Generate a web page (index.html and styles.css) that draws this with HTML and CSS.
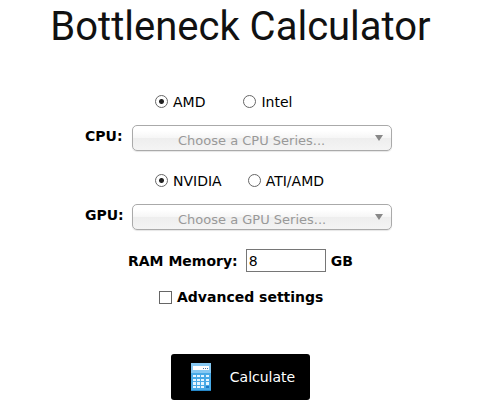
FILE: index.html
```html
<!DOCTYPE html>
<html lang="en">
<head>
<meta charset="utf-8">
<meta name="viewport" content="width=device-width, initial-scale=1">
<title>Bottleneck Calculator</title>
<link rel="stylesheet" href="styles.css">
</head>
<body>
<main>
  <h1>Bottleneck Calculator</h1>
  <form>
    <div class="brands brands-cpu">
      <label><input type="radio" name="cpu-brand" checked>AMD</label>
      <label><input type="radio" name="cpu-brand">Intel</label>
    </div>
    <div class="field">
      <label for="cpu">CPU:</label>
      <div class="picker"><select id="cpu"><option>Choose a CPU Series...</option></select></div>
    </div>
    <div class="brands brands-gpu">
      <label><input type="radio" name="gpu-brand" checked>NVIDIA</label>
      <label><input type="radio" name="gpu-brand">ATI/AMD</label>
    </div>
    <div class="field">
      <label for="gpu">GPU:</label>
      <div class="picker"><select id="gpu"><option>Choose a GPU Series...</option></select></div>
    </div>
    <div class="memory">
      <label for="ram">RAM Memory:</label>
      <input id="ram" type="text" value="8">
      <span>GB</span>
    </div>
    <label class="advanced"><input type="checkbox">Advanced settings</label>
    <button type="button">
      <svg width="22" height="30" viewBox="0 0 22 30" aria-hidden="true">
        <rect x="1" y="1" width="20" height="28" fill="#48a9e6"/>
        <rect x="1" y="1" width="20" height="10" fill="#86c8f2"/>
        <path d="M1 28h20v1H1z" fill="#2687c8"/>
        <rect x="3" y="4" width="16" height="4" fill="#fff"/>
        <path d="M13 6h1v1h-1zM15 6h1v1h-1zM17 6h1v1h-1z" fill="#4a78a8"/>
        <path d="M3 13h3v2H3zM7 13h3v2H7zM11 13h3v2h-3zM16 13h3v2h-3zM3 17h3v2H3zM7 17h3v2H7zM11 17h3v2h-3zM16 17h3v2h-3zM3 20h3v3H3zM7 20h3v3H7zM11 20h3v3h-3zM16 20h3v3h-3zM3 24h3v2H3zM7 24h3v2H7zM11 24h3v2h-3z" fill="#e4f4ff"/>
        <path d="M16 24h3v2h-3z" fill="#1d78c4"/>
      </svg>
      Calculate
    </button>
  </form>
</main>
</body>
</html>
```

FILE: styles.css
```css
* {
  box-sizing: border-box;
}

body {
  margin: 0;
  background: #fff;
  color: #000;
  font: 14px/18px Verdana, "DejaVu Sans", sans-serif;
}

main {
  display: flex;
  flex-direction: column;
  align-items: center;
}

h1 {
  margin: 0;
  padding: 3px 0 0 4px;
  color: #111;
  font: 400 40px/48px Roboto, sans-serif;
  white-space: nowrap;
}

form {
  display: flex;
  flex-direction: column;
  width: 307px;
  max-width: 100%;
  padding-top: 42px;
}

input {
  margin: 0;
}

label {
  white-space: nowrap;
}

.brands {
  display: flex;
  padding-left: 70px;
}

.brands-cpu {
  gap: 38px;
}

.brands-gpu {
  gap: 26px;
  margin-top: 21px;
}

.brands label,
.advanced {
  display: flex;
  align-items: center;
  gap: 5px;
}

input[type="radio"],
input[type="checkbox"] {
  appearance: none;
  flex: none;
  width: 13px;
  height: 13px;
  border: 1px solid #666;
  background: #fff;
}

input[type="radio"] {
  border-radius: 50%;
  margin-bottom: 2px;
}

input[type="radio"]:checked {
  background: radial-gradient(circle, #222 0 2px, #fff 3px);
}

.field {
  display: flex;
  align-items: center;
  justify-content: space-between;
  margin-top: 14px;
}

.field label,
.memory,
.advanced {
  font-weight: 700;
}

.field label {
  padding-bottom: 4px;
}

.picker {
  position: relative;
  width: 260px;
}

.picker::after {
  content: "";
  position: absolute;
  top: 10px;
  right: 9px;
  border: 4px solid transparent;
  border-top: 6px solid #888;
  border-bottom: 0;
  pointer-events: none;
}

select {
  appearance: none;
  display: block;
  width: 100%;
  height: 26px;
  padding: 5px 24px 0 45px;
  border: 1px solid #aaa;
  border-radius: 5px;
  background: linear-gradient(#fff 20%, #f6f6f6 50%, #eee 52%, #f4f4f4 100%);
  box-shadow: 0 1px 1px rgba(0, 0, 0, 0.1);
  color: #999;
  font: 13px/18px Verdana, "DejaVu Sans", sans-serif;
}

.memory {
  display: flex;
  align-items: center;
  gap: 5px;
  margin-top: 19px;
  padding-left: 43px;
}

.memory label {
  margin-right: 3px;
}

.memory input {
  width: 80px;
  height: 23px;
  padding: 1px 2px;
  border: 1px solid #767676;
  font: 14px/18px Verdana, "DejaVu Sans", sans-serif;
}

.advanced {
  margin-top: 16px;
  padding-left: 74px;
}

button {
  display: flex;
  align-items: center;
  align-self: center;
  gap: 18px;
  height: 46px;
  margin: 48px 0 16px 4px;
  padding: 0 15px 0 19px;
  border: 0;
  border-radius: 3px;
  background: #000;
  color: #fff;
  font: 14px/18px Verdana, "DejaVu Sans", sans-serif;
}
```
